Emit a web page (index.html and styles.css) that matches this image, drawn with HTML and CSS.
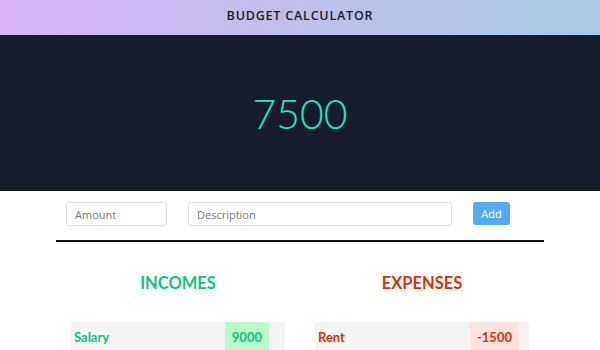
FILE: index.html
```html
<!DOCTYPE html>
<html lang="en">
<head>
    <meta charset="UTF-8">
    <meta name="viewport" content="width=device-width, initial-scale=1.0">
    <title>Budget Calculator</title>
    <link rel="stylesheet" href="styles.css">
</head>
<body>
    <header class="top-bar">
        <h1>BUDGET CALCULATOR</h1>
    </header>

    <div class="balance">
        <span id="total">7500</span>
    </div>

    <div class="wrapper">
        <form class="entry-form" onsubmit="return false">
            <input class="field amount" type="text" placeholder="Amount">
            <input class="field description" type="text" placeholder="Description">
            <button class="btn-add" type="submit">Add</button>
        </form>

        <div class="columns">
            <section class="column incomes">
                <h2>INCOMES</h2>
                <ul class="list">
                    <li class="item">
                        <span class="item-name">Salary</span>
                        <span class="item-value">9000</span>
                    </li>
                </ul>
            </section>
            <section class="column expenses">
                <h2>EXPENSES</h2>
                <ul class="list">
                    <li class="item">
                        <span class="item-name">Rent</span>
                        <span class="item-value">-1500</span>
                    </li>
                </ul>
            </section>
        </div>
    </div>
</body>
</html>
```

FILE: styles.css
```css
body {
    margin: 0;
    font-family: Lato, "Open Sans", sans-serif;
    background: white;
}
.top-bar {
    height: 35px;
    background: linear-gradient(90deg, #d7b4f4, #a9cae6);
    display: flex;
    align-items: center;
    justify-content: center;
}
.top-bar h1 {
    margin: 0 0 4px;
    font-family: "Open Sans", sans-serif;
    font-size: 12.5px;
    font-weight: 600;
    letter-spacing: 0.8px;
    color: #1c1c2a;
}
.balance {
    height: 156px;
    background: #161c2b;
    display: flex;
    align-items: center;
    justify-content: center;
}
.balance span {
    font-size: 41px;
    font-weight: 300;
    color: #1de9b6;
}
.wrapper {
    width: 488px;
    margin: 0 auto;
}
.entry-form {
    display: flex;
    gap: 21px;
    padding: 11px 10px 14px;
    border-bottom: 2px solid #111;
}
.field {
    height: 24px;
    box-sizing: border-box;
    border: 1px solid #dcdcdc;
    border-radius: 3px;
    padding: 0 8px;
    font-family: "Open Sans", sans-serif;
    font-size: 11px;
}
.field::placeholder {
    color: #777;
}
.amount {
    width: 101px;
}
.description {
    width: 264px;
}
.btn-add {
    height: 23px;
    width: 37px;
    padding: 0;
    border: none;
    border-radius: 3px;
    background: #55aaf8;
    color: white;
    font-family: "Open Sans", sans-serif;
    font-size: 11px;
}
.columns {
    display: flex;
    justify-content: center;
    gap: 30px;
    margin-top: 29px;
}
.column {
    width: 214px;
}
.column h2 {
    margin: 0;
    text-align: center;
    font-size: 16.5px;
    font-weight: 700;
    line-height: 24px;
}
.incomes h2, .incomes .item {
    color: #12c27e;
}
.expenses h2, .expenses .item {
    color: #d9300c;
}
.list {
    list-style: none;
    margin: 27px 0 0;
    padding: 0;
    background: #f4f4f4;
}
.item {
    display: flex;
    justify-content: space-between;
    align-items: stretch;
    height: 30px;
    padding: 0 16px 0 3px;
    font-size: 13px;
    font-weight: 700;
}
.expenses .item {
    padding-right: 10px;
}
.item-name {
    display: flex;
    align-items: center;
}
.item-value {
    display: flex;
    align-items: center;
    padding: 0 7px;
}
.incomes .item-value {
    background: #b9f9ca;
}
.expenses .item-value {
    background: #fde2de;
}
```
